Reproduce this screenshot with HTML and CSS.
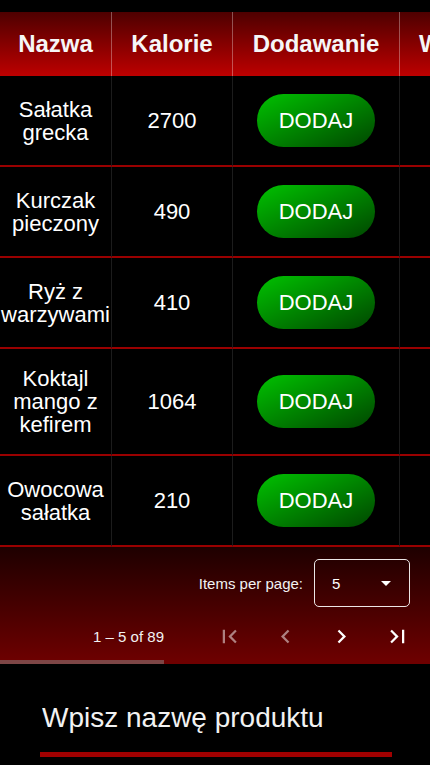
FILE: index.html
```html
<!DOCTYPE html>
<html lang="pl">
<head>
<meta charset="utf-8">
<title>Produkty</title>
<link rel="stylesheet" href="styles.css">
</head>
<body>
<main class="page">
  <div class="table-wrap">
    <table class="products">
      <colgroup>
        <col class="c-name"><col class="c-kcal"><col class="c-add"><col class="c-weight">
      </colgroup>
      <thead>
        <tr>
          <th>Nazwa</th><th>Kalorie</th><th>Dodawanie</th><th>Waga</th>
        </tr>
      </thead>
      <tbody>
        <tr><td>Sałatka grecka</td><td>2700</td><td><button class="add">DODAJ</button></td><td class="off"></td></tr>
        <tr><td>Kurczak pieczony</td><td>490</td><td><button class="add">DODAJ</button></td><td class="off"></td></tr>
        <tr><td>Ryż z warzywami</td><td>410</td><td><button class="add">DODAJ</button></td><td class="off"></td></tr>
        <tr><td>Koktajl mango z kefirem</td><td>1064</td><td><button class="add">DODAJ</button></td><td class="off"></td></tr>
        <tr><td>Owocowa sałatka</td><td>210</td><td><button class="add">DODAJ</button></td><td class="off"></td></tr>
      </tbody>
    </table>
  </div>

  <div class="paginator">
    <div class="pg-row pg-size">
      <span class="pg-label">Items per page:</span>
      <div class="pg-select">
        <span class="pg-value">5</span>
        <span class="pg-arrow"></span>
      </div>
    </div>
    <div class="pg-row pg-nav">
      <span class="pg-range">1 – 5 of 89</span>
      <button class="pg-btn disabled" aria-label="First page">
        <svg viewBox="0 0 24 24"><path d="M18.41 16.59L13.82 12l4.59-4.59L17 6l-6 6 6 6zM6 6h2v12H6z"/></svg>
      </button>
      <button class="pg-btn disabled" aria-label="Previous page">
        <svg viewBox="0 0 24 24"><path d="M15.41 7.41L14 6l-6 6 6 6 1.41-1.41L10.83 12z"/></svg>
      </button>
      <button class="pg-btn" aria-label="Next page">
        <svg viewBox="0 0 24 24"><path d="M10 6L8.59 7.41 13.17 12l-4.58 4.59L10 18l6-6z"/></svg>
      </button>
      <button class="pg-btn" aria-label="Last page">
        <svg viewBox="0 0 24 24"><path d="M5.59 7.41L10.18 12l-4.59 4.59L7 18l6-6-6-6zM16 6h2v12h-2z"/></svg>
      </button>
    </div>
  </div>
  <div class="hscroll"><div class="hscroll-thumb"></div></div>

  <div class="search">
    <input class="search-input" type="text" placeholder="Wpisz nazwę produktu">
  </div>
</main>
</body>
</html>
```
FILE: styles.css
```css
html, body {
  margin: 0;
  padding: 0;
  background: #000;
}
body {
  font-family: "Liberation Sans", Arial, sans-serif;
  color: #fff;
  overflow: hidden;
}
.page {
  padding-top: 12px;
  width: 430px;
}
.table-wrap {
  width: 430px;
  overflow: hidden;
}
.products {
  table-layout: fixed;
  border-collapse: separate;
  border-spacing: 0;
  width: 502px;
}
.c-name { width: 112px; }
.c-kcal { width: 121px; }
.c-add { width: 167px; }
.c-weight { width: 102px; }

.products th {
  height: 64px;
  padding: 0;
  font-size: 24px;
  font-weight: bold;
  color: #f6f6f6;
  text-align: center;
  white-space: nowrap;
  background: linear-gradient(#4e0000, #bd0000);
  border-right: 1px solid rgba(255, 255, 255, 0.32);
  box-sizing: border-box;
}
.products td {
  padding: 18px 0;
  font-size: 22px;
  line-height: 23px;
  text-align: center;
  vertical-align: middle;
  border-right: 1px solid #1c1c1c;
  border-bottom: 2px solid #9a0000;
  box-sizing: border-box;
}
.add {
  display: inline-block;
  width: 118px;
  height: 53px;
  border: none;
  border-radius: 27px;
  background: linear-gradient(to bottom right, #00c200, #004600);
  color: #fff;
  font-family: inherit;
  font-size: 22px;
  padding: 0;
  vertical-align: middle;
}

.paginator {
  height: 113px;
  box-sizing: border-box;
  padding-top: 12px;
  background: linear-gradient(#1e0000, #6c0000);
  display: flex;
  flex-direction: column;
  gap: 5px;
}
.pg-row {
  display: flex;
  align-items: center;
  justify-content: flex-end;
  height: 48px;
}
.pg-size {
  padding-right: 20px;
}
.pg-label {
  font-size: 15px;
  color: #f2f2f2;
  margin-right: 11px;
}
.pg-select {
  width: 96px;
  height: 48px;
  box-sizing: border-box;
  border: 1.5px solid rgba(255, 255, 255, 0.9);
  border-radius: 5px;
  display: flex;
  align-items: center;
  justify-content: space-between;
  padding: 0 18px 0 17px;
}
.pg-value {
  font-size: 15px;
}
.pg-arrow {
  width: 0;
  height: 0;
  border-left: 5px solid transparent;
  border-right: 5px solid transparent;
  border-top: 5px solid #fff;
}
.pg-nav {
  padding-right: 5px;
}
.pg-range {
  font-size: 15px;
  color: #f2f2f2;
  margin-right: 37px;
}
.pg-btn {
  width: 56px;
  height: 48px;
  padding: 0;
  border: none;
  background: transparent;
  display: flex;
  align-items: center;
  justify-content: center;
}
.pg-btn svg {
  width: 27px;
  height: 27px;
  fill: #fff;
}
.pg-btn.disabled svg {
  fill: rgba(255, 255, 255, 0.5);
}
.hscroll {
  height: 4px;
  background: #6e0000;
}
.hscroll-thumb {
  width: 164px;
  height: 4px;
  background: #7d4545;
}

.search {
  padding: 38px 38px 0 40px;
}
.search-input {
  display: block;
  width: 100%;
  box-sizing: border-box;
  height: 55px;
  padding: 0 2px 18px;
  font-family: inherit;
  font-size: 28px;
  line-height: 32px;
  color: #fff;
  background: transparent;
  border: none;
  border-bottom: 5px solid #a00000;
  outline: none;
}
.search-input::placeholder {
  color: #f2f2f2;
  opacity: 1;
}
```
